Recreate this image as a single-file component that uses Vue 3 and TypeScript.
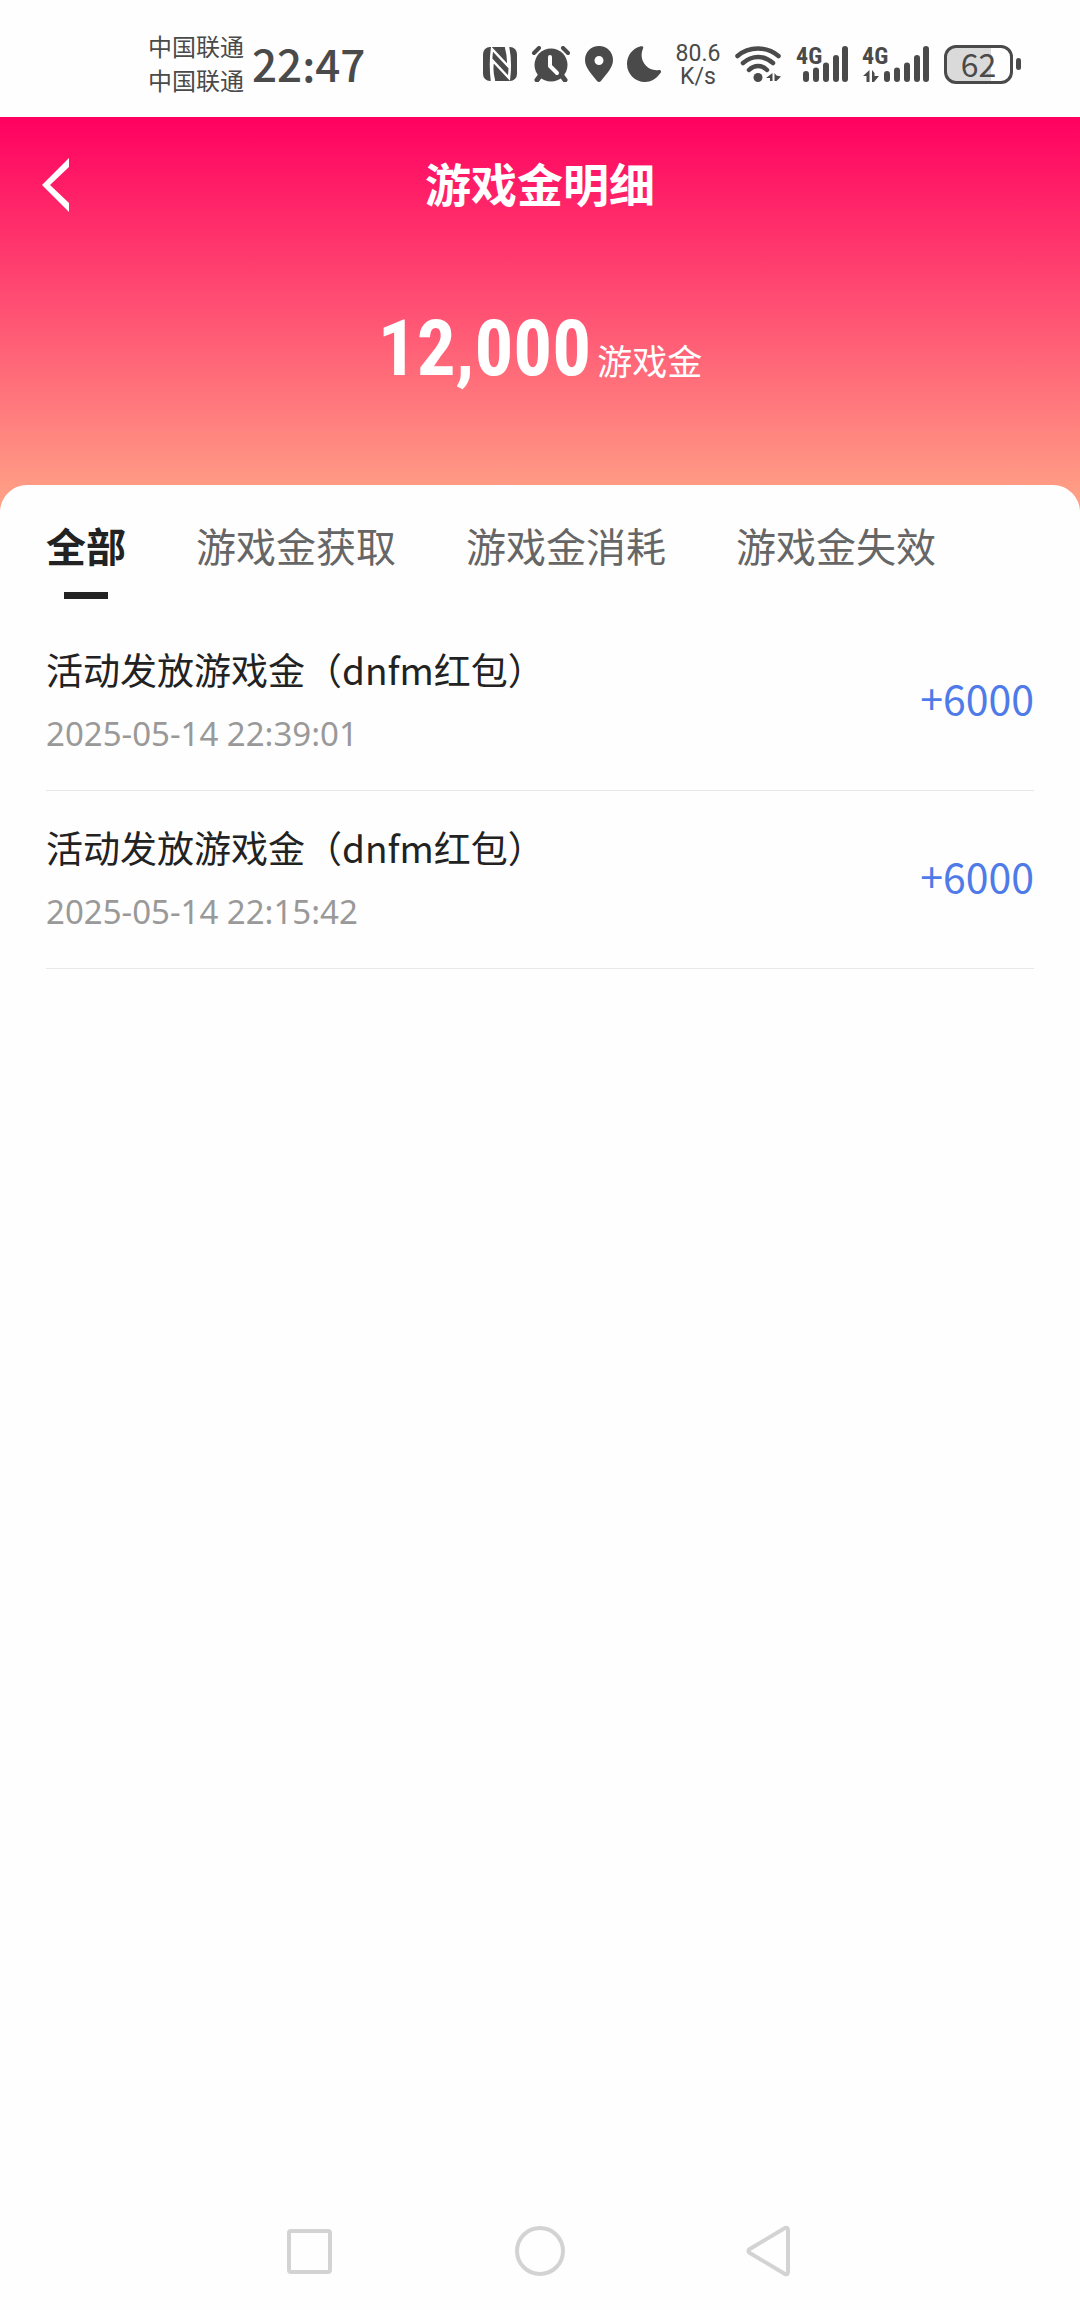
<script setup lang="ts">
import { ref } from 'vue'

interface GoldRecord {
  id: number
  title: string
  time: string
  amount: string
}

const tabs: string[] = ['全部', '游戏金获取', '游戏金消耗', '游戏金失效']
const activeTab = ref<number>(0)

const records: GoldRecord[] = [
  { id: 1, title: '活动发放游戏金（dnfm红包）', time: '2025-05-14 22:39:01', amount: '+6000' },
  { id: 2, title: '活动发放游戏金（dnfm红包）', time: '2025-05-14 22:15:42', amount: '+6000' },
]
</script>

<template>
  <div class="screen">
    <div class="status">
      <div class="carriers">
        <span>中国联通</span>
        <span>中国联通</span>
      </div>
      <time class="clock">22:47</time>
      <div class="indicators">
        <!-- NFC -->
        <svg width="34" height="36" viewBox="0 0 34 36" aria-hidden="true">
          <rect x="0" y="1" width="34" height="34" rx="7" fill="currentColor" />
          <path d="M9 35Q7 18 9 3L25 20Q26 12 23 1M11 35Q8 24 10 15L26 32Q28 16 25 1" fill="none" stroke="#fff" stroke-width="2.500" />
        </svg>
        <!-- alarm -->
        <svg width="40" height="36" viewBox="0 0 40 36" aria-hidden="true">
          <g stroke="currentColor" stroke-linecap="round" stroke-width="4">
            <path d="M3 7L8 2M32 2L37 7" />
            <path d="M9 30L6 34M31 30L34 34" stroke-width="5" />
          </g>
          <circle cx="20" cy="19" r="16.500" fill="currentColor" />
          <path d="M19 11V20L26 27" fill="none" stroke="#fff" stroke-width="4" stroke-linecap="round" stroke-linejoin="round" />
        </svg>
        <!-- location -->
        <svg width="28" height="36" viewBox="0 0 28 36" aria-hidden="true">
          <path fill="currentColor" fill-rule="evenodd" d="M14 0C6 0 0 6 0 14C0 22 7 28 12 35Q14 37 16 35C21 28 28 22 28 14C28 6 22 0 14 0ZM14 10A4.500 4.500 0 1 1 14 19A4.500 4.500 0 1 1 14 10Z" />
        </svg>
        <!-- moon -->
        <svg width="34" height="36" viewBox="0 0 34 36" aria-hidden="true">
          <path fill="currentColor" d="M13 .600C15 -.400 17 .600 16 2.500C11 14 20 26 32 24C34 24 34.600 25.500 33.500 27C29 33 24 36 18 36C8 36 0 28 0 18C0 10 5 3 13 .600Z" />
        </svg>
        <div class="speed">
          <span>80.6</span>
          <span>K/s</span>
        </div>
        <!-- wifi -->
        <svg width="47" height="36" viewBox="0 0 47 36" aria-hidden="true">
          <g fill="none" stroke="currentColor" stroke-width="4.500" stroke-linecap="round">
            <path d="M2.500 10Q11 2.500 23 2.500T43.500 10" />
            <path d="M8 17Q15 11 23 11T38 17" />
            <path d="M14 24Q18 20 23 20T32 24" />
          </g>
          <circle cx="23" cy="31.500" r="4.500" fill="currentColor" />
          <path fill="currentColor" d="M31 32L37.500 27V35H35V32ZM39.500 27L41.500 29.500L46 30.500L41.500 35H39.500Z" />
        </svg>
        <div class="signal">
          <span class="net">4G</span>
          <svg width="52" height="36" viewBox="0 0 52 36" aria-hidden="true">
            <path d="M10 28V33M20 24.500V33M30 19.500V33M40 12V33M49 3V33" stroke="currentColor" stroke-width="6" stroke-linecap="round" />
          </svg>
        </div>
        <div class="signal">
          <span class="net">4G</span>
          <svg width="68" height="36" viewBox="0 0 68 36" aria-hidden="true">
            <path d="M25 28V33M35 24.500V33M45 19.500V33M55 12V33M64 3V33" stroke="currentColor" stroke-width="6" stroke-linecap="round" />
            <path fill="currentColor" d="M1 30L7.500 24V36H4.500V30ZM10 24L12.500 27V30H17L12 36H10Z" />
          </svg>
        </div>
        <div class="battery">
          <span class="cell">62</span>
          <span class="nub"></span>
        </div>
      </div>
    </div>

    <header class="hero">
      <div class="bar">
        <button class="back" type="button" aria-label="返回">
          <svg width="27" height="54" viewBox="0 0 27 54" aria-hidden="true">
            <path fill="#fff" d="M27 0V9L8 27L27 45V54L0 27Z" />
          </svg>
        </button>
        <h1>游戏金明细</h1>
      </div>
      <p class="balance"><strong>12,000</strong><span>游戏金</span></p>
    </header>

    <main class="sheet">
      <nav class="tabs">
        <button
          v-for="(tab, i) in tabs"
          :key="tab"
          type="button"
          :class="['tab', { active: i === activeTab }]"
          @click="activeTab = i"
        >
          {{ tab }}
        </button>
      </nav>
      <ul class="records">
        <li v-for="r in records" :key="r.id" class="record">
          <div class="info">
            <h2>{{ r.title }}</h2>
            <time>{{ r.time }}</time>
          </div>
          <span class="amount">{{ r.amount }}</span>
        </li>
      </ul>
    </main>

    <footer class="keys">
      <button type="button" aria-label="最近任务">
        <svg width="52" height="52" viewBox="0 0 52 52" aria-hidden="true">
          <rect x="5" y="6" width="41" height="41" rx="2" />
        </svg>
      </button>
      <button type="button" aria-label="主屏幕">
        <svg width="52" height="52" viewBox="0 0 52 52" aria-hidden="true">
          <circle cx="26" cy="26" r="23" />
        </svg>
      </button>
      <button type="button" aria-label="返回上一页">
        <svg width="52" height="52" viewBox="0 0 52 52" aria-hidden="true">
          <path d="M5 24.500L41 3Q44 2 44 5V47Q44 50 41 49L5 27.500Q4 26 5 24.500Z" />
        </svg>
      </button>
    </footer>
  </div>
</template>

<style>
body {
  margin: 0;
  background: #fefefe;
}
</style>

<style scoped>
.screen {
  min-height: 100vh;
  display: flex;
  flex-direction: column;
  background: #fefefe;
  font-family: "Noto Sans CJK SC", "Noto Sans", sans-serif;
  color: #222;
}

h1,
h2,
p,
ul {
  margin: 0;
  padding: 0;
  font-weight: 400;
}

button {
  padding: 0;
  border: 0;
  background: none;
  font: inherit;
  color: inherit;
}

svg {
  display: block;
}

.status {
  display: flex;
  align-items: center;
  height: 117px;
  box-sizing: border-box;
  padding: 11px 59px 0 148px;
  color: #4a4a4a;
}

.carriers {
  display: flex;
  flex-direction: column;
  padding-bottom: 2px;
  font-size: 24px;
  line-height: 34px;
}

.clock {
  margin-left: 8px;
  padding-bottom: 2px;
  font-size: 44px;
  line-height: 48px;
  font-weight: 500;
}

.indicators {
  display: flex;
  align-items: center;
  gap: 14px;
  margin-left: auto;
}

.speed {
  display: flex;
  flex-direction: column;
  align-items: center;
  width: 46px;
  padding-top: 2px;
  font-family: Roboto, sans-serif;
  font-size: 23px;
  line-height: 23px;
}

.signal {
  position: relative;
}

.net {
  position: absolute;
  left: 0;
  top: 0;
  font-family: "Roboto Condensed", Roboto, sans-serif;
  font-size: 24px;
  line-height: 20px;
  font-weight: 700;
}

.battery {
  display: flex;
  align-items: center;
  gap: 3px;
}

.cell {
  width: 69px;
  height: 39px;
  box-sizing: border-box;
  border: 3px solid #4a4a4a;
  border-radius: 12px;
  background: linear-gradient(90deg, #dadada 70%, #fefefe 70%);
  font-size: 32px;
  line-height: 30px;
  text-align: center;
}

.nub {
  width: 5px;
  height: 12px;
  border-radius: 3px;
  background: #4a4a4a;
}

.hero {
  padding-bottom: 112px;
  background: linear-gradient(#ff0060, #ff9d85 95%);
  color: #fff;
}

.bar {
  display: grid;
  grid-template-columns: 1fr auto 1fr;
  align-items: center;
  height: 136px;
  padding: 0 42px;
}

.back {
  justify-self: start;
}

h1 {
  padding-bottom: 6px;
  font-size: 46px;
  line-height: 60px;
  font-weight: 700;
}

.balance {
  display: flex;
  justify-content: center;
  align-items: baseline;
  gap: 6px;
  margin-top: 46px;
  height: 101px;
  line-height: 100px;
}

.balance strong {
  font-family: "Roboto Condensed", Roboto, sans-serif;
  font-size: 77px;
  font-weight: 700;
}

.balance span {
  font-size: 35px;
}

.sheet {
  flex: 1;
  margin-top: -27px;
  padding: 0 46px;
  border-radius: 27px 27px 0 0;
  background: #fefefe;
}

.tabs {
  display: flex;
  gap: 70px;
  padding-top: 30px;
}

.tab {
  position: relative;
  height: 84px;
  padding-bottom: 24px;
  font-size: 40px;
  line-height: 60px;
  color: #666;
  white-space: nowrap;
}

.tab.active {
  font-weight: 700;
  color: #222;
}

.tab.active::after {
  content: "";
  position: absolute;
  left: 50%;
  bottom: 0;
  width: 44px;
  height: 7px;
  margin-left: -22px;
  background: #222;
}

.records {
  margin-top: 14px;
  list-style: none;
}

.record {
  display: flex;
  align-items: center;
  justify-content: space-between;
  height: 178px;
  box-sizing: border-box;
  border-bottom: 1px solid #e8e8e8;
}

.info {
  display: flex;
  flex-direction: column;
  gap: 14px;
  padding-bottom: 4px;
}

h2 {
  font-size: 37px;
  line-height: 54px;
}

.info time {
  font-family: "Noto Sans", sans-serif;
  font-size: 33px;
  line-height: 48px;
  color: #999;
}

.amount {
  padding-bottom: 10px;
  font-size: 41px;
  line-height: 60px;
  color: #4f7be8;
}

.keys {
  display: flex;
  justify-content: center;
  height: 118px;
}

.keys button {
  display: flex;
  align-items: center;
  justify-content: center;
  width: 230px;
}

.keys svg {
  fill: none;
  stroke: #d3d3d3;
  stroke-width: 4;
  stroke-linejoin: round;
}
</style>
